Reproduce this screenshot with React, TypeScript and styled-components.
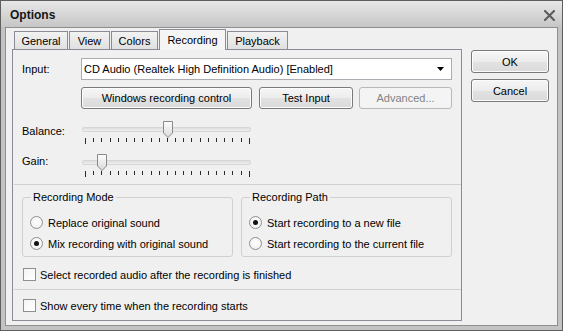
import React from 'react';
import styled, { createGlobalStyle } from 'styled-components';

const GlobalStyle = createGlobalStyle`
  html, body { margin: 0; padding: 0; }
  body {
    background: #f0f0f0;
    font-family: "Liberation Sans", Arial, sans-serif;
    font-size: 11px;
    color: #000;
  }
  *, *::before, *::after { box-sizing: border-box; }
`;

const Window = styled.div`
  width: 563px;
  height: 331px;
  display: flex;
  flex-direction: column;
  border: 1px solid #5f5f5f;
  background: #c3c3c3;
  overflow: hidden;
`;

const TitleBar = styled.div`
  flex: none;
  height: 26px;
  display: flex;
  align-items: center;
  justify-content: space-between;
  padding: 2px 7px 0 9px;
  background: linear-gradient(#e7e7e7, #c6c6c6);
`;

const Title = styled.div`
  font-weight: bold;
  font-size: 12px;
  color: #151515;
`;

const CloseIcon = styled.svg`
  width: 11px;
  height: 11px;
  display: block;
`;

const Frame = styled.div`
  flex: 1;
  min-height: 0;
  display: flex;
  padding: 0 4px 4px;
  background: #c3c3c3;
`;

const Client = styled.div`
  flex: 1;
  display: flex;
  border: 1px solid #8f8f8f;
  background: #f0f0f0;
  padding: 0 8px 4px 6px;
`;

const MainColumn = styled.div`
  width: 450px;
  flex: none;
  display: flex;
  flex-direction: column;
`;

const TabStrip = styled.div`
  flex: none;
  height: 22px;
  display: flex;
  align-items: flex-end;
  gap: 1px;
  padding-left: 2px;
`;

const Tab = styled.div<{ $w: number; $active?: boolean }>`
  width: ${p => p.$w}px;
  height: ${p => (p.$active ? 21 : 19)}px;
  display: flex;
  justify-content: center;
  align-items: flex-start;
  padding-top: ${p => (p.$active ? 4 : 3)}px;
  border: 1px solid #898c95;
  border-bottom: ${p => (p.$active ? 'none' : '1px solid #898c95')};
  background: ${p => (p.$active ? '#f5f5f5' : 'linear-gradient(#f2f2f2, #e0e0e0)')};
  position: relative;
  z-index: ${p => (p.$active ? 1 : 0)};
`;

const Panel = styled.div`
  flex: 1;
  margin-top: -1px;
  border: 1px solid #898c95;
  background: #f0f0f0;
  padding: 8px 9px 0;
  display: flex;
  flex-direction: column;
`;

const FieldRow = styled.div<{ $mt?: number }>`
  display: flex;
  align-items: center;
  margin-top: ${p => p.$mt ?? 0}px;
`;

const Label = styled.div<{ $pt?: number }>`
  width: 60px;
  flex: none;
  align-self: flex-start;
  padding-top: ${p => p.$pt ?? 0}px;
`;

const InputLabel = styled.div`
  width: 59px;
  flex: none;
`;

const Combo = styled.div`
  flex: 1;
  height: 22px;
  border: 1px solid #abadb3;
  background: #fff;
  display: flex;
  align-items: center;
  justify-content: space-between;
  padding: 0 7px 0 2px;
`;

const ButtonRow = styled.div`
  display: flex;
  margin-top: 7px;
  padding-left: 59px;
`;

const Button = styled.button<{ $w: number; $h?: number; $ml?: number }>`
  width: ${p => p.$w}px;
  height: ${p => p.$h ?? 22}px;
  margin-left: ${p => p.$ml ?? 0}px;
  padding: 0;
  font: inherit;
  color: #000;
  border: 1px solid #7a7a7a;
  border-radius: 3px;
  background: linear-gradient(#f6f6f6, #ececec 50%, #e2e2e2 51%, #dadada);
  box-shadow: inset 0 0 0 1px #fcfcfc;
  flex: none;
  &:disabled {
    border-color: #b5b9bb;
    background: #f4f4f4;
    box-shadow: none;
    color: #838383;
  }
`;

const SliderBox = styled.div`
  position: relative;
  width: 169px;
  height: 23px;
  display: flex;
  flex-direction: column;
`;

const Track = styled.div`
  margin-top: 6px;
  height: 5px;
  border: 1px solid #d6d6d6;
  border-radius: 2px;
  background: linear-gradient(#dedede, #efefef);
`;

const Ticks = styled.div`
  margin: 6px 0 0 3px;
  width: 165px;
  display: flex;
  justify-content: space-between;
  align-items: flex-start;
`;

const Tick = styled.span<{ $long?: boolean }>`
  width: 1px;
  height: ${p => (p.$long ? 6 : 4)}px;
  background: #2a2a2a;
`;

const ThumbSvg = styled.svg`
  position: absolute;
  top: 0;
  width: 10px;
  height: 17px;
`;

const Separator = styled.div<{ $mt: number }>`
  height: 1px;
  background: #d0d0d0;
  margin: ${p => p.$mt}px -9px 0 -8px;
`;

const Groups = styled.div`
  display: flex;
  gap: 8px;
  margin-top: 6px;
`;

const Group = styled.fieldset`
  width: 211px;
  margin: 0;
  padding: 8px 6px 2px 7px;
  border: 1px solid #d0d0d0;
  border-radius: 3px;
  min-width: 0;
`;

const Legend = styled.legend`
  padding: 0 2px;
  margin-left: 1px;
  line-height: 13px;
  font-size: 11px;
`;

const OptionRow = styled.label`
  height: 21px;
  display: flex;
  align-items: center;
  gap: 5px;
`;

const Radio = styled.span<{ $checked?: boolean }>`
  position: relative;
  flex: none;
  width: 13px;
  height: 13px;
  border-radius: 50%;
  border: 1px solid #8e8f8f;
  background: radial-gradient(circle at 50% 40%, #ffffff, #ececec);
  &::after {
    content: '';
    display: ${p => (p.$checked ? 'block' : 'none')};
    position: absolute;
    left: 3px;
    top: 3px;
    width: 5px;
    height: 5px;
    border-radius: 50%;
    background: #111;
  }
`;

const CheckRow = styled.label<{ $mt: number }>`
  display: flex;
  align-items: center;
  gap: 4px;
  height: 13px;
  margin: ${p => p.$mt}px 0 0 1px;
`;

const CheckBox = styled.span`
  flex: none;
  width: 13px;
  height: 13px;
  border: 1px solid #8e8f8f;
  background: linear-gradient(135deg, #f4f4f4, #ffffff);
`;

const SideColumn = styled.div`
  width: 78px;
  flex: none;
  margin-left: 9px;
  padding-top: 22px;
  display: flex;
  flex-direction: column;
  gap: 6px;
`;

const Thumb: React.FC<{ left: number }> = ({ left }) => (
  <ThumbSvg viewBox="0 0 10 17" style={{ left }}>
    <defs>
      <linearGradient id="thumbGrad" x1="0" y1="0" x2="0" y2="1">
        <stop offset="0" stopColor="#fdfdfd" />
        <stop offset="1" stopColor="#d9d9d9" />
      </linearGradient>
    </defs>
    <path d="M0.5 0.5 H9.5 V12 L5 16.5 L0.5 12 Z" fill="url(#thumbGrad)" stroke="#8a8a8a" strokeWidth="1" />
  </ThumbSvg>
);

const Slider: React.FC<{ value: number }> = ({ value }) => {
  const ticks = Array.from({ length: 21 }, (_, i) => i);
  const center = 3 + (value * 164) / 20;
  return (
    <SliderBox>
      <Track />
      <Ticks>
        {ticks.map(i => (
          <Tick key={i} $long={i === 0 || i === 20} />
        ))}
      </Ticks>
      <Thumb left={Math.round(center - 4.5)} />
    </SliderBox>
  );
};

export default function App() {
  return (
    <>
      <GlobalStyle />
      <Window>
        <TitleBar>
          <Title>Options</Title>
          <CloseIcon viewBox="0 0 11 11">
            <path d="M1 1 L10 10 M10 1 L1 10" stroke="#5a5a5a" strokeWidth="2" strokeLinecap="square" />
          </CloseIcon>
        </TitleBar>
        <Frame>
          <Client>
            <MainColumn>
              <TabStrip>
                <Tab $w={54}>General</Tab>
                <Tab $w={41}>View</Tab>
                <Tab $w={47}>Colors</Tab>
                <Tab $w={67} $active>Recording</Tab>
                <Tab $w={61}>Playback</Tab>
              </TabStrip>
              <Panel>
                <FieldRow>
                  <InputLabel>Input:</InputLabel>
                  <Combo>
                    <span>CD Audio (Realtek High Definition Audio) [Enabled]</span>
                    <svg width="7" height="4" viewBox="0 0 7 4">
                      <path d="M0 0 H7 L3.5 4 Z" fill="#000" />
                    </svg>
                  </Combo>
                </FieldRow>
                <ButtonRow>
                  <Button $w={171}>Windows recording control</Button>
                  <Button $w={94} $ml={7}>Test Input</Button>
                  <Button $w={93} $ml={6} disabled>Advanced...</Button>
                </ButtonRow>
                <FieldRow $mt={12}>
                  <Label $pt={4}>Balance:</Label>
                  <Slider value={10} />
                </FieldRow>
                <FieldRow $mt={10}>
                  <Label $pt={1}>Gain:</Label>
                  <Slider value={2} />
                </FieldRow>
                <Separator $mt={7} />
                <Groups>
                  <Group>
                    <Legend>Recording Mode</Legend>
                    <OptionRow>
                      <Radio />
                      <span>Replace original sound</span>
                    </OptionRow>
                    <OptionRow>
                      <Radio $checked />
                      <span>Mix recording with original sound</span>
                    </OptionRow>
                  </Group>
                  <Group>
                    <Legend>Recording Path</Legend>
                    <OptionRow>
                      <Radio $checked />
                      <span>Start recording to a new file</span>
                    </OptionRow>
                    <OptionRow>
                      <Radio />
                      <span>Start recording to the current file</span>
                    </OptionRow>
                  </Group>
                </Groups>
                <CheckRow $mt={11}>
                  <CheckBox />
                  <span>Select recorded audio after the recording is finished</span>
                </CheckRow>
                <Separator $mt={8} />
                <CheckRow $mt={9}>
                  <CheckBox />
                  <span>Show every time when the recording starts</span>
                </CheckRow>
              </Panel>
            </MainColumn>
            <SideColumn>
              <Button $w={78} $h={23}>OK</Button>
              <Button $w={78} $h={23}>Cancel</Button>
            </SideColumn>
          </Client>
        </Frame>
      </Window>
    </>
  );
}
